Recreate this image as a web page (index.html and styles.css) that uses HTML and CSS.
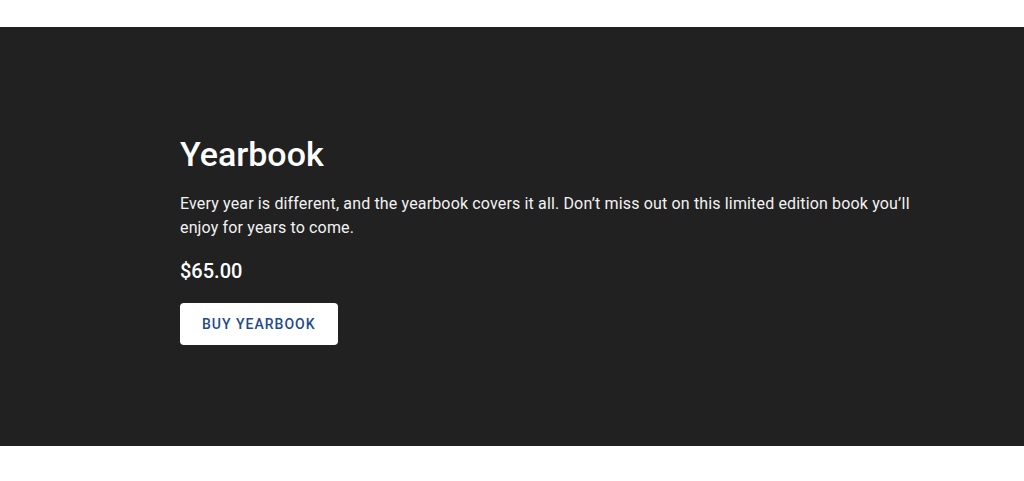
FILE: index.html
```html
<!DOCTYPE html>
<html>
<head>
<meta charset="utf-8">
<link rel="stylesheet" href="styles.css">
</head>
<body>
<div class="page">
  <section class="hero">
    <div class="inner">
      <h1 class="title">Yearbook</h1>
      <p class="desc">Every year is different, and the yearbook covers it all. Don’t miss out on this limited edition book you’ll enjoy for years to come.</p>
      <p class="price">$65.00</p>
      <a class="btn" href="#">BUY YEARBOOK</a>
    </div>
  </section>
</div>
</body>
</html>
```

FILE: styles.css
```css
html, body {
  margin: 0;
  padding: 0;
  background: #ffffff;
  font-family: Roboto, "Liberation Sans", sans-serif;
}
.page {
  padding-top: 27px;
}
.hero {
  background: #212121;
  color: #ffffff;
  height: 419px;
  box-sizing: border-box;
  padding-top: 107px;
}
.inner {
  margin-left: 180px;
  max-width: 750px;
}
.title {
  margin: 0;
  font-size: 34px;
  font-weight: 500;
  line-height: 40px;
}
.desc {
  margin: 18px 0 0;
  font-size: 16px;
  line-height: 24px;
  letter-spacing: 0.15px;
  color: #f2f2f2;
}
.price {
  margin: 18px 0 0;
  font-size: 20px;
  font-weight: 500;
  line-height: 26px;
}
.btn {
  display: inline-block;
  margin-top: 19px;
  background: #ffffff;
  color: #1f4a8c;
  text-decoration: none;
  font-size: 14px;
  font-weight: 500;
  letter-spacing: 1px;
  line-height: 42px;
  height: 42px;
  padding: 0 22px;
  border-radius: 4px;
}
```
